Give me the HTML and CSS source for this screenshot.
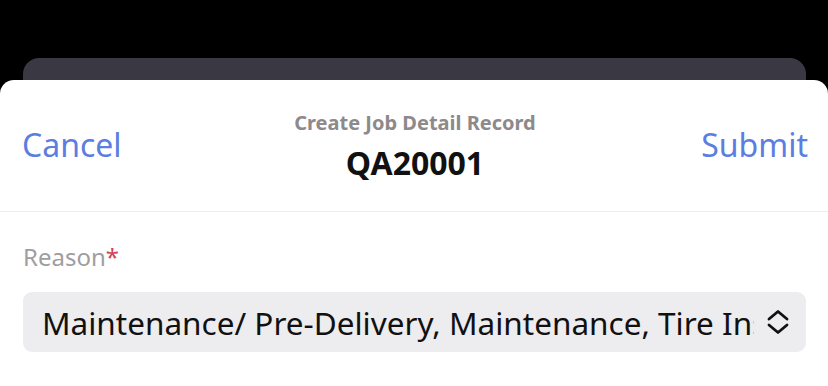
FILE: index.html
```html
<!DOCTYPE html>
<html lang="en">
<head>
    <meta charset="UTF-8">
    <meta name="viewport" content="width=device-width, initial-scale=1.0">
    <title>Create Job Detail Record</title>
    <link rel="stylesheet" href="styles.css">
</head>
<body>
    <!-- card stacked behind the sheet -->
    <div class="back-card"></div>

    <div class="sheet">
        <div class="sheet-header">
            <a href="#" class="header-btn cancel">Cancel</a>
            <div class="header-title">
                <div class="subtitle">Create Job Detail Record</div>
                <div class="record-id">QA20001</div>
            </div>
            <a href="#" class="header-btn submit">Submit</a>
        </div>

        <div class="form-body">
            <label class="field-label" for="reason">Reason<span class="required">*</span></label>
            <div class="select-box" id="reason">
                <span class="select-value">Maintenance/ Pre-Delivery, Maintenance, Tire Inspection</span>
                <svg class="select-arrows" width="24" height="26" viewBox="0 0 24 26">
                    <path d="M3 10 L12 2.5 L21 10" fill="none" stroke="#111" stroke-width="2.8" stroke-linecap="round" stroke-linejoin="round"/>
                    <path d="M3 16 L12 23.5 L21 16" fill="none" stroke="#111" stroke-width="2.8" stroke-linecap="round" stroke-linejoin="round"/>
                </svg>
            </div>
        </div>
    </div>
</body>
</html>
```

FILE: styles.css
```css
body {
    font-family: "Noto Sans", "Open Sans", sans-serif;
    margin: 0;
    padding: 58px 0 0 0;
    background-color: #000;
    height: 386px;
    overflow: hidden;
    box-sizing: border-box;
}
.back-card {
    height: 22px;
    margin: 0 22px 0 23px;
    background-color: #3a3843;
    border-radius: 16px 16px 0 0;
}
.sheet {
    background-color: #fff;
    border-radius: 14px 14px 0 0;
    height: 306px;
}
.sheet-header {
    display: grid;
    grid-template-columns: 1fr auto 1fr;
    align-items: center;
    height: 131px;
    padding: 0 20px 0 22px;
    border-bottom: 1px solid #ededed;
}
.header-btn {
    color: #5b7ee0;
    text-decoration: none;
    font-size: 32px;
    padding-bottom: 2px;
}
.header-btn.submit {
    justify-self: end;
}
.header-title {
    text-align: center;
}
.subtitle {
    color: #8e898b;
    font-size: 20px;
    font-weight: bold;
    line-height: 26px;
}
.record-id {
    color: #111;
    font-size: 32px;
    font-weight: bold;
    line-height: 38px;
    margin-top: 8px;
}
.form-body {
    padding: 29px 22px 0 23px;
}
.field-label {
    display: block;
    color: #a19d9f;
    font-size: 24px;
    line-height: 32px;
}
.field-label .required {
    color: #d2445c;
}
.select-box {
    display: flex;
    align-items: center;
    height: 60px;
    margin-top: 19px;
    padding: 0 16px 0 19px;
    background-color: #edecef;
    border-radius: 9px;
}
.select-value {
    flex: 1;
    overflow: hidden;
    white-space: nowrap;
    color: #111;
    font-size: 31.5px;
}
.select-arrows {
    flex-shrink: 0;
    margin-left: 12px;
}
```
